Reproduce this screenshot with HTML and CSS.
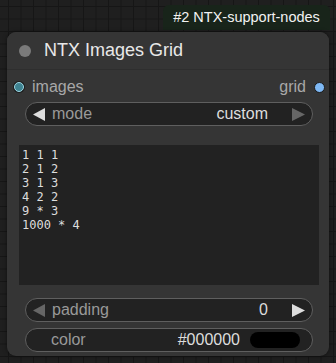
FILE: index.html
```html
<!DOCTYPE html>
<html>
<head>
<meta charset="utf-8">
<link rel="stylesheet" href="styles.css">
</head>
<body>
<div class="canvas">
  <div class="badge">#2 NTX-support-nodes</div>
  <div class="node">
    <div class="title">
      <span class="title-dot"></span>
      <span class="title-text">NTX Images Grid</span>
    </div>
    <div class="body">
      <div class="slots">
        <div class="slot slot-in"><span class="dot dot-in"></span><span>images</span></div>
        <div class="slot slot-out"><span>grid</span><span class="dot dot-out"></span></div>
      </div>
      <div class="widget combo">
        <svg class="arrow" width="13" height="13" viewBox="0 0 13 13"><polygon points="12,0 12,13 0,6.5" fill="#dddddd"/></svg>
        <span class="label">mode</span>
        <span class="value">custom</span>
        <svg class="arrow" width="13" height="13" viewBox="0 0 13 13"><polygon points="0,0 0,13 13,6.5" fill="#666666"/></svg>
      </div>
      <div class="textarea">1 1 1
2 1 2
3 1 3
4 2 2
9 * 3
1000 * 4</div>
      <div class="widget number">
        <svg class="arrow" width="13" height="13" viewBox="0 0 13 13"><polygon points="12,0 12,13 0,6.5" fill="#666666"/></svg>
        <span class="label">padding</span>
        <span class="value">0</span>
        <svg class="arrow arrow-gap" width="13" height="13" viewBox="0 0 13 13"><polygon points="0,0 0,13 13,6.5" fill="#dddddd"/></svg>
      </div>
      <div class="widget color">
        <span class="label">color</span>
        <span class="value">#000000</span>
        <span class="swatch"></span>
      </div>
    </div>
  </div>
</div>
</body>
</html>
```
FILE: styles.css
```css
html, body {
  margin: 0;
  padding: 0;
}
body {
  width: 336px;
  height: 363px;
  overflow: hidden;
  font-family: "Liberation Sans", Arial, sans-serif;
}
.canvas {
  position: relative;
  width: 336px;
  height: 363px;
  background-color: #1f1f1f;
  background-image:
    linear-gradient(to right, #161616 1px, transparent 1px),
    linear-gradient(to bottom, #161616 1px, transparent 1px);
  background-size: 12.5px 12.5px;
  background-position: 8px 6px;
}
.badge {
  position: absolute;
  left: 163px;
  top: 5px;
  width: 167px;
  height: 25px;
  box-sizing: border-box;
  background: #18241a;
  color: #f2f2f2;
  font-size: 14.5px;
  line-height: 25px;
  text-align: center;
  border-radius: 6px 6px 0 0;
}
.node {
  position: absolute;
  left: 7px;
  top: 32px;
  width: 322px;
  height: 324px;
  background: #353535;
  border-radius: 9px;
  box-shadow: 0 0 4px rgba(0,0,0,0.5);
  display: flex;
  flex-direction: column;
}
.title {
  height: 37px;
  display: flex;
  align-items: center;
  border-bottom: 1px solid #2e2e2e;
  background: #353535;
  border-radius: 9px 9px 0 0;
}
.title-dot {
  width: 12px;
  height: 12px;
  border-radius: 50%;
  background: #7a7a7a;
  margin-left: 12px;
}
.title-text {
  margin-left: 13px;
  color: #e8e8e8;
  font-size: 18px;
}
.body {
  display: flex;
  flex-direction: column;
  padding-top: 7px;
}
.slots {
  height: 20px;
  display: flex;
  justify-content: space-between;
  align-items: center;
  color: #a8a8a8;
  font-size: 16px;
}
.slot {
  display: flex;
  align-items: center;
}
.dot {
  box-sizing: border-box;
  border-radius: 50%;
}
.dot-in {
  width: 10px;
  height: 10px;
  margin-left: 7px;
  margin-right: 8px;
  background: #3f8391;
  border: 1.5px solid #9fd6e2;
  box-shadow: 0 0 0 1px #1c1c1c;
}
.dot-out {
  width: 11px;
  height: 11px;
  margin-left: 8px;
  margin-right: 4px;
  background: #7eb8f4;
  border: 1px solid #1a1a1a;
}
.widget {
  box-sizing: border-box;
  height: 24px;
  margin-left: 18px;
  margin-right: 16px;
  background: #222222;
  border: 1px solid #5f5f5f;
  border-radius: 12px;
  display: flex;
  align-items: center;
  font-size: 16px;
}
.widget .label {
  color: #999999;
  flex: 1;
}
.widget .value {
  color: #dddddd;
}
.arrow {
  flex: none;
}
.combo {
  margin-top: 5px;
  padding: 0 7px 0 7px;
}
.combo .label {
  margin-left: 6px;
}
.combo .value {
  margin-right: 24px;
}
.textarea {
  margin: 19px 10px 0 12px;
  height: 140px;
  box-sizing: border-box;
  background: #222222;
  color: #dddddd;
  font-family: "DejaVu Sans Mono", monospace;
  font-size: 12px;
  line-height: 14px;
  padding: 3px 3px;
  white-space: pre;
}
.number {
  margin-top: 13px;
  padding: 0 7px;
}
.number .label {
  margin-left: 6px;
}
.number .value {
  margin-right: 24px;
}
.color {
  margin-top: 6px;
  padding: 0 12px 0 25px;
}
.color .value {
  margin-right: 10px;
}
.swatch {
  width: 50px;
  height: 16px;
  border-radius: 8px;
  background: #000000;
}
```
